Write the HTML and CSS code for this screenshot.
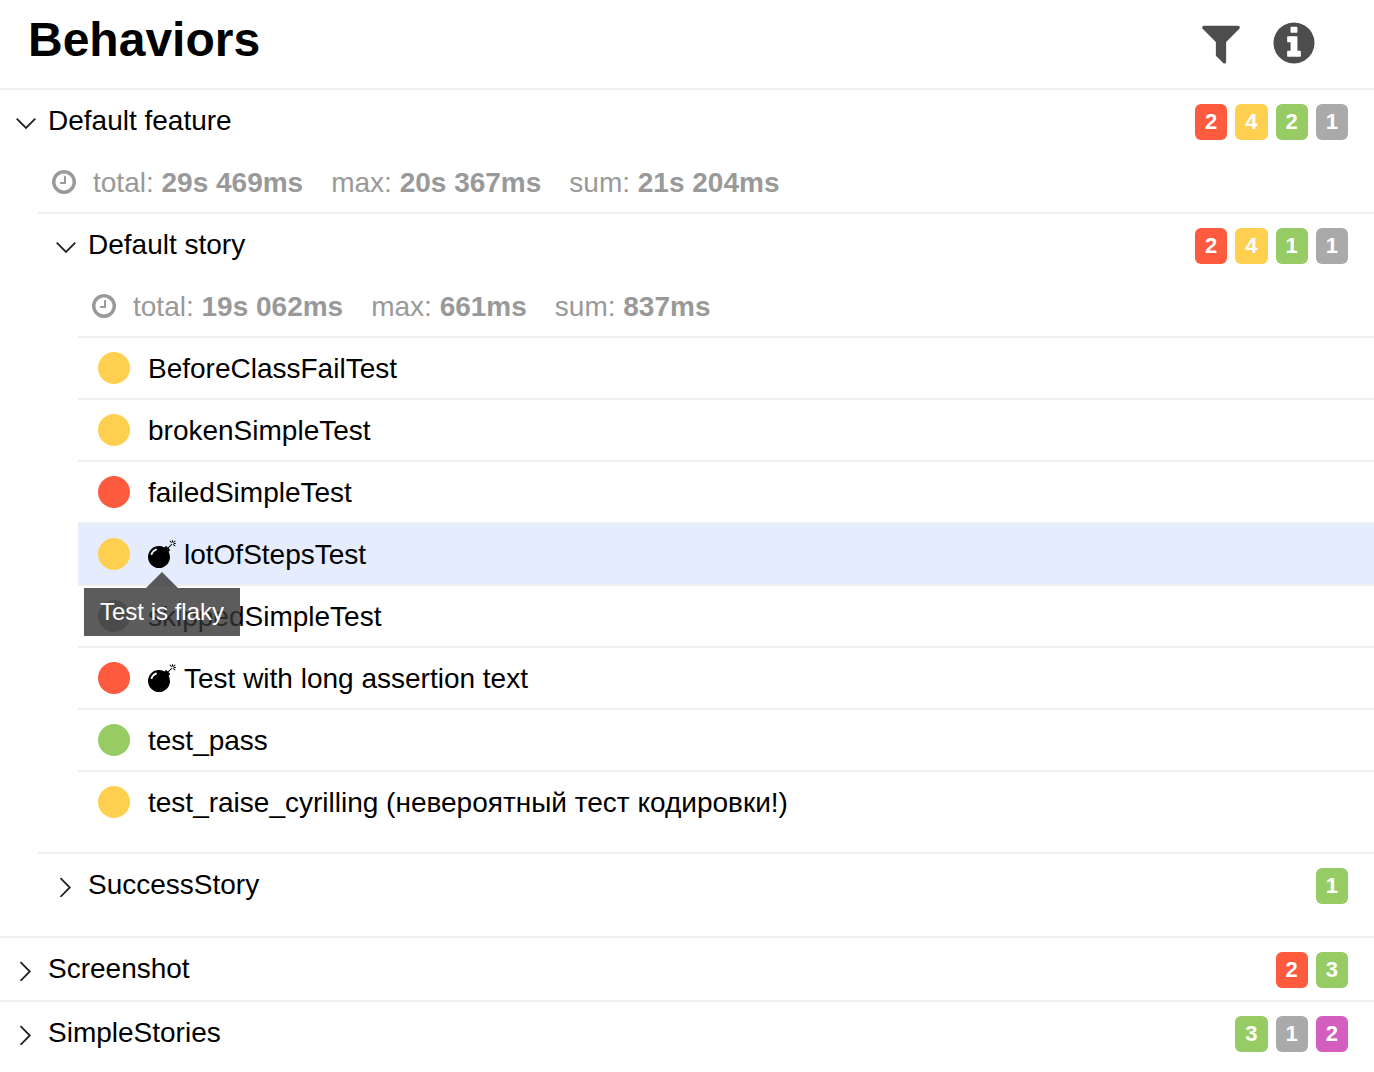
FILE: index.html
```html
<!DOCTYPE html>
<html lang="en">
<head>
<meta charset="utf-8">
<meta name="viewport" content="width=device-width, initial-scale=1">
<title>Behaviors</title>
<link rel="stylesheet" href="styles.css">
</head>
<body>
<svg class="sprite" aria-hidden="true">
  <symbol id="filter" viewBox="0 0 1792 1792"><path d="M1595 295q17 41-14 70l-493 493v742q0 42-39 59-13 5-25 5-27 0-45-19l-256-256q-19-19-19-45v-486l-493-493q-31-29-14-70 17-39 59-39h1280q42 0 59 39z"/></symbol>
  <symbol id="info" viewBox="0 0 1792 1792"><path d="M1152 1376v-160q0-14-9-23t-23-9h-96v-512q0-14-9-23t-23-9h-320q-14 0-23 9t-9 23v160q0 14 9 23t23 9h96v320h-96q-14 0-23 9t-9 23v160q0 14 9 23t23 9h448q14 0 23-9t9-23zm-128-896v-160q0-14-9-23t-23-9h-192q-14 0-23 9t-9 23v160q0 14 9 23t23 9h192q14 0 23-9t9-23zm640 416q0 209-103 385.500t-279.500 279.500-385.500 103-385.500-103-279.500-279.500-103-385.500 103-385.500 279.500-279.500 385.500-103 385.500 103 279.500 279.500 103 385.500z"/></symbol>
  <symbol id="clock" viewBox="0 0 1792 1792"><path d="M1024 544v448q0 14-9 23t-23 9h-320q-14 0-23-9t-9-23v-64q0-14 9-23t23-9h224v-352q0-14 9-23t23-9h64q14 0 23 9t9 23zm416 352q0-148-73-273t-198-198-273-73-273 73-198 198-73 273 73 273 198 198 273 73 273-73 198-198 73-273zm224 0q0 209-103 385.500t-279.500 279.500-385.500 103-385.500-103-279.500-279.500-103-385.500 103-385.500 279.500-279.500 385.500-103 385.500 103 279.500 279.500 103 385.500z"/></symbol>
  <symbol id="bomb" viewBox="0 0 1792 1792"><path d="M571 589q-10-25-34-35t-49 0q-108 44-191 127t-127 191q-10 25 0 49t35 34q13 5 24 5 42 0 60-40 34-84 98.500-148.500t148.500-98.500q25-11 35-35t0-49zm942-356l46 46-244 243 68 68q19 19 19 45.500t-19 45.500l-64 64q89 161 89 343 0 143-55.500 273.500t-150 225-225 150-273.500 55.500-273.500-55.500-225-150-150-225-55.500-273.500 55.500-273.500 150-225 225-150 273.500-55.500q182 0 343 89l64-64q19-19 45.500-19t45.500 19l68 68zm8-56q-10 10-22 10-13 0-23-10l-91-90q-9-10-9-23t9-23q10-9 23-9t23 9l90 91q10 9 10 22.500t-10 22.500zm230 230q-11 9-23 9t-23-9l-90-91q-10-9-10-22.500t10-22.500q9-10 22.500-10t22.500 10l91 90q9 10 9 23t-9 23zm41-183q0 14-9 23t-23 9h-96q-14 0-23-9t-9-23 9-23 23-9h96q14 0 23 9t9 23zm-192-192v96q0 14-9 23t-23 9-23-9-9-23v-96q0-14 9-23t23-9 23 9 9 23zm151 55l-91 90q-10 10-22 10-13 0-23-10-10-9-10-22.500t10-22.500l90-91q10-9 23-9t23 9q9 10 9 23t-9 23z"/></symbol>
  <symbol id="down" viewBox="0 0 20 20"><path class="stroke" d="M.7 5.700L10 15l9.300-9.300"/></symbol>
  <symbol id="right" viewBox="0 0 20 20"><path class="stroke" d="M4.500 1.200L13.800 10.500 4.500 19.800"/></symbol>
</svg>

<header class="header">
  <h1 class="title">Behaviors</h1>
  <div class="tools">
    <button class="tool" type="button" aria-label="Filter"><svg class="tool-icon"><use href="#filter"/></svg></button>
    <button class="tool" type="button" aria-label="Info"><svg class="tool-icon"><use href="#info"/></svg></button>
  </div>
</header>

<main class="tree">
  <section class="group">
    <button class="row" type="button" aria-expanded="true">
      <svg class="chevron"><use href="#down"/></svg>
      <span class="name">Default feature</span>
      <span class="badges"><span class="badge failed">2</span><span class="badge broken">4</span><span class="badge passed">2</span><span class="badge skipped">1</span></span>
    </button>
    <div class="stats">
      <svg class="clock"><use href="#clock"/></svg>
      <span>total: <b>29s 469ms</b></span><span>max: <b>20s 367ms</b></span><span>sum: <b>21s 204ms</b></span>
    </div>
    <div class="stories">
      <section class="group">
        <button class="row" type="button" aria-expanded="true">
          <svg class="chevron"><use href="#down"/></svg>
          <span class="name">Default story</span>
          <span class="badges"><span class="badge failed">2</span><span class="badge broken">4</span><span class="badge passed">1</span><span class="badge skipped">1</span></span>
        </button>
        <div class="stats">
          <svg class="clock"><use href="#clock"/></svg>
          <span>total: <b>19s 062ms</b></span><span>max: <b>661ms</b></span><span>sum: <b>837ms</b></span>
        </div>
        <ul class="tests">
          <li><a class="test" href="#"><span class="dot broken"></span>BeforeClassFailTest</a></li>
          <li><a class="test" href="#"><span class="dot broken"></span>brokenSimpleTest</a></li>
          <li><a class="test" href="#"><span class="dot failed"></span>failedSimpleTest</a></li>
          <li><a class="test selected" href="#"><span class="dot broken"></span><span class="flaky"><svg class="bomb"><use href="#bomb"/></svg><span class="tooltip" role="tooltip">Test is flaky</span></span>lotOfStepsTest</a></li>
          <li><a class="test" href="#"><span class="dot skipped"></span>skippedSimpleTest</a></li>
          <li><a class="test" href="#"><span class="dot failed"></span><span class="flaky"><svg class="bomb"><use href="#bomb"/></svg></span>Test with long assertion text</a></li>
          <li><a class="test" href="#"><span class="dot passed"></span>test_pass</a></li>
          <li><a class="test" href="#"><span class="dot broken"></span>test_raise_cyrilling (невероятный тест кодировки!)</a></li>
        </ul>
      </section>
      <section class="group">
        <button class="row" type="button" aria-expanded="false">
          <svg class="chevron"><use href="#right"/></svg>
          <span class="name">SuccessStory</span>
          <span class="badges"><span class="badge passed">1</span></span>
        </button>
      </section>
    </div>
  </section>
  <section class="group">
    <button class="row" type="button" aria-expanded="false">
      <svg class="chevron"><use href="#right"/></svg>
      <span class="name">Screenshot</span>
      <span class="badges"><span class="badge failed">2</span><span class="badge passed">3</span></span>
    </button>
  </section>
  <section class="group">
    <button class="row" type="button" aria-expanded="false">
      <svg class="chevron"><use href="#right"/></svg>
      <span class="name">SimpleStories</span>
      <span class="badges"><span class="badge passed">3</span><span class="badge skipped">1</span><span class="badge unknown">2</span></span>
    </button>
  </section>
</main>
</body>
</html>
```
FILE: styles.css
```css
* {
  box-sizing: border-box;
}

body {
  margin: 0;
  background: #fff;
  color: #000;
  font: 28px/34px "Liberation Sans", Arial, sans-serif;
}

button {
  margin: 0;
  padding: 0;
  border: 0;
  background: none;
  color: inherit;
  font: inherit;
  text-align: left;
  cursor: pointer;
}

svg {
  display: block;
  flex: none;
  fill: currentColor;
}

.sprite {
  position: absolute;
  width: 0;
  height: 0;
}

.stroke {
  fill: none;
  stroke: #222;
  stroke-width: 1.8;
}

.header {
  display: flex;
  justify-content: space-between;
  align-items: flex-start;
  padding: 12px 56px 20px 28px;
}

.title {
  margin: 0;
  font-size: 48px;
  line-height: 56px;
}

.tools {
  display: flex;
  gap: 25px;
  padding-top: 7px;
  color: #4d4d4d;
}

.tool-icon {
  width: 48px;
  height: 48px;
}

.group {
  border-top: 2px solid #eceff1;
}

.row {
  display: flex;
  align-items: flex-start;
  width: 100%;
  padding: 14px 26px 12px 16px;
}

.chevron {
  width: 20px;
  height: 20px;
  margin: 9px 12px 0 0;
}

.name {
  flex: 1;
}

.badges {
  display: flex;
  gap: 8px;
}

.badge {
  padding: 0 10px;
  border-radius: 6px;
  color: #fff;
  font-size: 22px;
  font-weight: bold;
  line-height: 36px;
}

.failed {
  background: #fd5a3e;
}

.broken {
  background: #ffd050;
}

.passed {
  background: #97cc64;
}

.skipped {
  background: #aaa;
}

.unknown {
  background: #d35ebe;
}

.stats {
  display: flex;
  align-items: flex-start;
  gap: 28px;
  padding: 14px 26px 12px 50px;
  color: #999;
}

.clock {
  width: 28px;
  height: 28px;
  margin: 2px -13px 0 0;
}

.stories {
  margin-left: 38px;
  padding-bottom: 20px;
}

.stories .row {
  padding-left: 18px;
}

.stories .stats {
  padding-left: 52px;
}

.tests {
  margin: 0 0 20px 40px;
  padding: 0;
  list-style: none;
}

.test {
  display: flex;
  align-items: flex-start;
  padding: 14px 20px 12px;
  border-top: 2px solid #eceff1;
  color: inherit;
  text-decoration: none;
}

.selected {
  background: #e4ecfe;
}

.dot {
  flex: none;
  width: 32px;
  height: 32px;
  margin-right: 18px;
  border-radius: 50%;
}

.flaky {
  position: relative;
  margin: 2px 8px 0 0;
}

.bomb {
  width: 28px;
  height: 28px;
}

.tooltip {
  position: absolute;
  z-index: 1;
  top: 48px;
  left: 50%;
  padding: 8px 16px;
  background: rgba(51, 51, 51, 0.8);
  color: #fff;
  font-size: 24px;
  line-height: 32px;
  white-space: nowrap;
  transform: translateX(-50%);
}

.tooltip::before {
  content: "";
  position: absolute;
  bottom: 100%;
  left: 50%;
  margin-left: -16px;
  border: 16px solid transparent;
  border-top: 0;
  border-bottom-color: rgba(51, 51, 51, 0.8);
}
```
